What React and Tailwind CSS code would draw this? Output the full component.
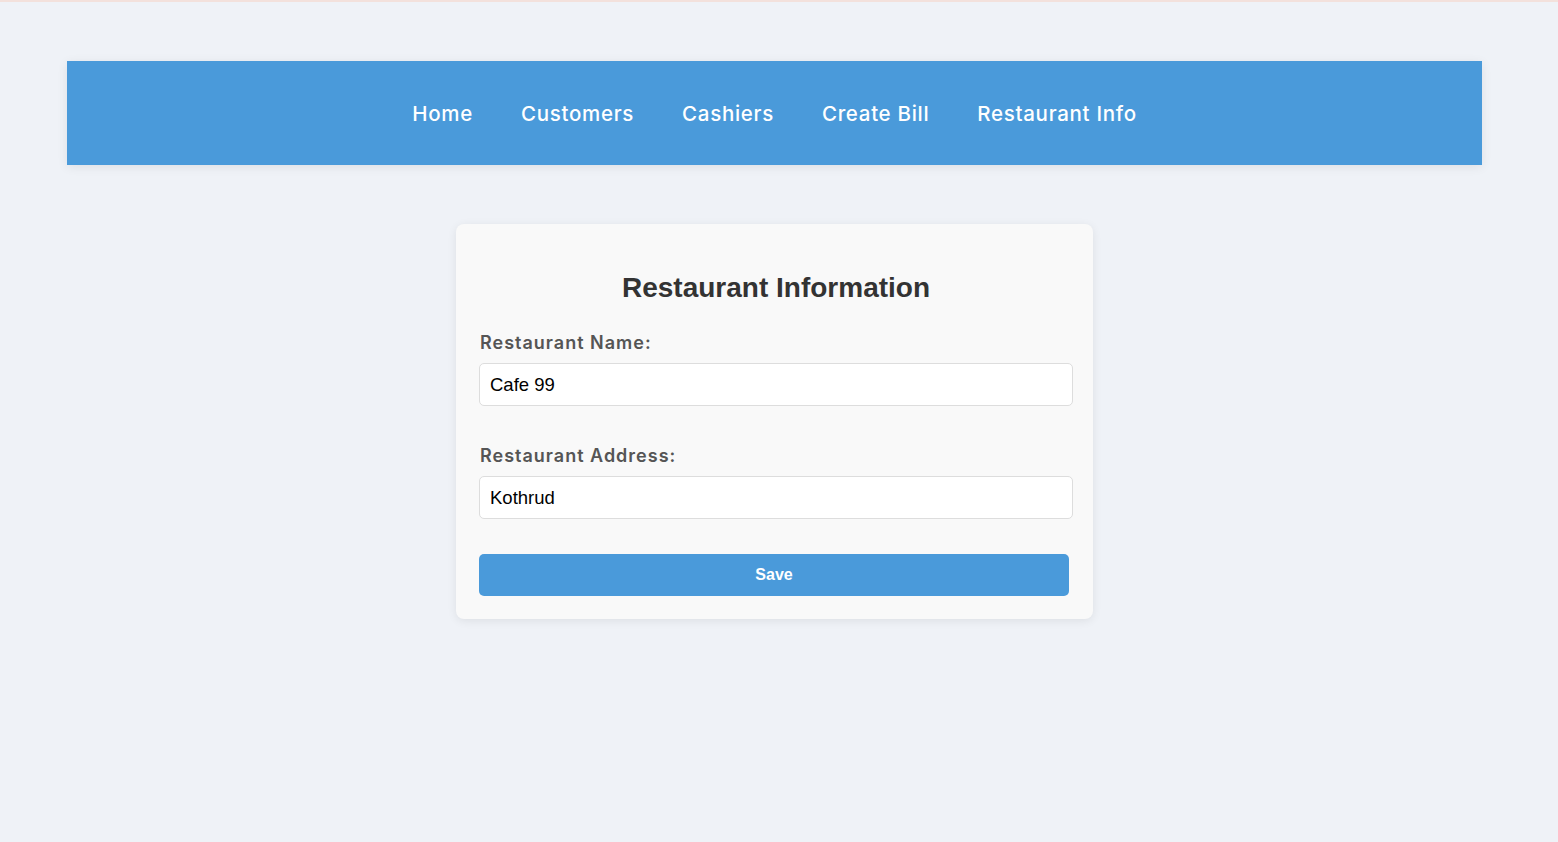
import React from "react";

const links = ["Home", "Customers", "Cashiers", "Create Bill", "Restaurant Info"];

export default function App() {
  return (
    <div className="min-h-[842px] bg-[#eff2f7] border-t-2 border-[#f3e1dc] pt-[59px]">
      <div className="ml-[67px] w-[1415px]">
        <nav className="h-[104px] bg-[#4a9ada] shadow-[0_2px_10px_rgba(0,0,0,0.08)] flex items-center justify-center gap-[48px]">
          {links.map((l) => (
            <a
              key={l}
              href="#"
              className="text-white text-[20.5px] leading-[28px] font-medium font-['Inter',sans-serif] tracking-[0.7px] pt-[2px]"
            >
              {l}
            </a>
          ))}
        </nav>

        <div className="mx-auto mt-[59px] w-[637px] bg-[#f9f9f9] rounded-[8px] shadow-[0_2px_10px_rgba(0,0,0,0.08)] pl-[23px] pr-[20px] pt-[48px] pb-[23px]">
          <h2 className="text-center text-[28px] leading-[32px] font-bold text-[#333] font-['Liberation_Sans',Arial,sans-serif]">
            Restaurant Information
          </h2>

          <div className="mt-[25px]">
            <label className="block text-[18px] leading-[27px] font-semibold text-[#555] font-['Inter',sans-serif] tracking-[1px] mb-[7px] pl-px">
              Restaurant Name:
            </label>
            <input
              defaultValue="Cafe 99"
              className="block w-[594px] h-[43px] bg-white border border-[#ddd] rounded-[5px] px-[10px] text-[18.5px] text-black font-['Liberation_Sans',Arial,sans-serif] outline-none"
            />
          </div>

          <div className="mt-[36px]">
            <label className="block text-[18px] leading-[27px] font-semibold text-[#555] font-['Inter',sans-serif] tracking-[1px] mb-[7px] pl-px">
              Restaurant Address:
            </label>
            <input
              defaultValue="Kothrud"
              className="block w-[594px] h-[43px] bg-white border border-[#ddd] rounded-[5px] px-[10px] text-[18.5px] text-black font-['Liberation_Sans',Arial,sans-serif] outline-none"
            />
          </div>

          <button className="mt-[35px] block w-[590px] h-[42px] bg-[#4a9ada] rounded-[5px] text-white text-[16px] font-bold font-['Liberation_Sans',Arial,sans-serif]">
            Save
          </button>
        </div>
      </div>
    </div>
  );
}
